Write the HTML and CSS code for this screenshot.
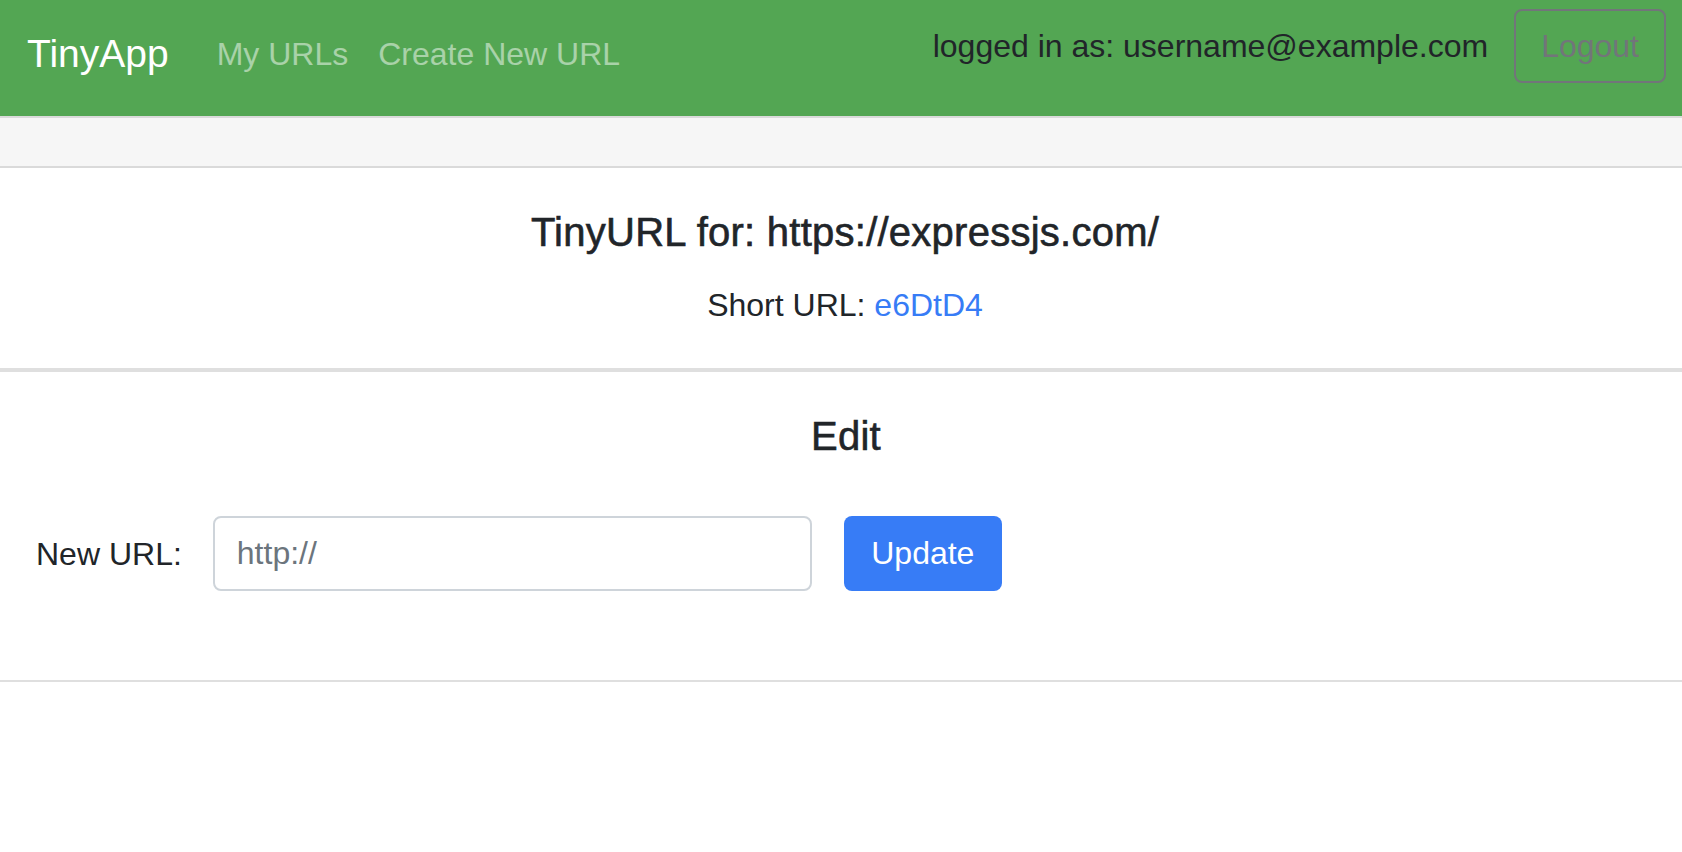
FILE: index.html
```html
<!DOCTYPE html>
<html lang="en">
<head>
<meta charset="utf-8">
<title>TinyApp</title>
<link rel="stylesheet" href="styles.css">
</head>
<body>
<nav class="navbar">
  <div class="nav-left">
    <a class="brand" href="#">TinyApp</a>
    <a class="nav-link" href="#">My URLs</a>
    <a class="nav-link" href="#">Create New URL</a>
  </div>
  <form class="nav-right">
    <span class="nav-text">logged in as: username@example.com</span>
    <button type="button" class="btn-logout">Logout</button>
  </form>
</nav>
<div class="card-header"></div>
<section class="card-body">
  <h5 class="title">TinyURL for: https://expressjs.com/</h5>
  <p class="short">Short URL: <a href="#">e6DtD4</a></p>
</section>
<section class="card-edit">
  <h5 class="title">Edit</h5>
  <form class="edit-form">
    <label class="edit-label" for="longURL">New URL:</label>
    <input class="edit-input" id="longURL" type="text" placeholder="http://">
    <button type="button" class="btn-update">Update</button>
  </form>
</section>
</body>
</html>
```
FILE: styles.css
```css
* { box-sizing: border-box; }
html, body { margin: 0; padding: 0; }
body {
  font-family: "Liberation Sans", Arial, sans-serif;
  font-size: 32px;
  line-height: 1.5;
  color: #212529;
  background: #fff;
}
a { text-decoration: none; }

.navbar {
  height: 116px;
  background: #53a653;
  display: flex;
  justify-content: space-between;
  align-items: flex-start;
  padding: 0 16px 0 27px;
}
.nav-left {
  display: flex;
  align-items: center;
  height: 60px;
  margin-top: 24px;
}
.brand {
  color: #fff;
  font-size: 39px;
  line-height: 60px;
  margin-right: 48px;
}
.nav-link {
  color: rgba(255, 255, 255, 0.5);
  margin-right: 30px;
}
.nav-right {
  display: flex;
  align-items: center;
  margin: 9px 0 0 0;
  gap: 26px;
}
.nav-text { color: #212529; }
.btn-logout {
  font-family: inherit;
  font-size: 32px;
  line-height: 48px;
  padding: 11px 25px;
  border: 2px solid #72757a;
  border-radius: 8px;
  background: transparent;
  color: #72757a;
}

.card-header {
  height: 52px;
  background: #f6f6f6;
  border-top: 2px solid #dadada;
  border-bottom: 2px solid #dadada;
}

.card-body {
  height: 204px;
  padding: 40px 0 0 8px;
  text-align: center;
  border-bottom: 4px solid #dfdfdf;
}
.title {
  margin: 0;
  font-size: 40px;
  font-weight: 500;
  line-height: 48px;
  letter-spacing: 0.25px;
  -webkit-text-stroke: 0.6px currentColor;
}
.short { margin: 25px 0 0 0; }
.short a { color: #377cf6; }

.card-edit {
  height: 310px;
  padding: 40px 0 0 10px;
  text-align: center;
  border-bottom: 2px solid #dfdfdf;
}
.edit-form {
  display: flex;
  align-items: center;
  margin: 56px 0 0 -10px;
  padding-left: 36px;
}
.edit-label { margin-right: 31px; }
.edit-input {
  width: 599px;
  height: 75px;
  border: 2px solid #ced4da;
  border-radius: 8px;
  padding: 0 22px;
  font-family: inherit;
  font-size: 32px;
  color: #495057;
  margin-right: 32px;
}
.edit-input::placeholder { color: #6c757d; }
.btn-update {
  width: 158px;
  height: 75px;
  border: none;
  border-radius: 8px;
  background: #377cf6;
  color: #fff;
  font-family: inherit;
  font-size: 32px;
}
```
